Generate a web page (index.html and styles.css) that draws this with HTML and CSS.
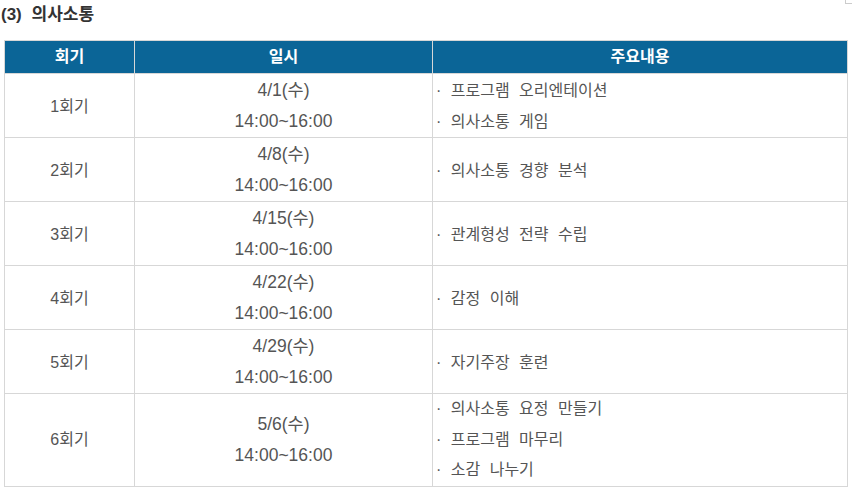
FILE: index.html
```html
<!DOCTYPE html>
<html lang="ko">
<head>
<meta charset="utf-8">
<link rel="stylesheet" href="styles.css">
</head>
<body>
<div class="corner"></div>
<h3 class="title">(3) 의사소통</h3>
<table class="tbl">
  <colgroup><col class="c1"><col class="c2"><col class="c3"></colgroup>
  <thead>
    <tr><th>회기</th><th>일시</th><th>주요내용</th></tr>
  </thead>
  <tbody>
    <tr><td>1회기</td><td class="date">4/1(수)<br>14:00~16:00</td><td class="left">· 프로그램 오리엔테이션<br>· 의사소통 게임</td></tr>
    <tr><td>2회기</td><td class="date">4/8(수)<br>14:00~16:00</td><td class="left">· 의사소통 경향 분석</td></tr>
    <tr><td>3회기</td><td class="date">4/15(수)<br>14:00~16:00</td><td class="left">· 관계형성 전략 수립</td></tr>
    <tr><td>4회기</td><td class="date">4/22(수)<br>14:00~16:00</td><td class="left">· 감정 이해</td></tr>
    <tr><td>5회기</td><td class="date">4/29(수)<br>14:00~16:00</td><td class="left">· 자기주장 훈련</td></tr>
    <tr class="last"><td>6회기</td><td class="date">5/6(수)<br>14:00~16:00</td><td class="left">· 의사소통 요정 만들기<br>· 프로그램 마무리<br>· 소감 나누기</td></tr>
  </tbody>
</table>
</body>
</html>
```
FILE: styles.css
```css
html, body { margin: 0; padding: 0; background: #fff; }
body {
  font-family: "Liberation Sans", "Noto Sans CJK KR", sans-serif;
  color: #555;
  position: relative;
  width: 852px;
  height: 491px;
  overflow: hidden;
}
.corner {
  position: absolute;
  left: 845px;
  top: 0;
  width: 10px;
  height: 3px;
  border-left: 1px solid #ccc;
  border-bottom: 1px solid #ccc;
}
.title {
  margin: 0;
  padding: 3px 0 0 1px;
  height: 40px;
  box-sizing: border-box;
  font-size: 17px;
  font-weight: 600;
  color: #333;
  line-height: 24px;
  word-spacing: 5px;
}
.tbl {
  margin-left: 4px;
  width: 844px;
  border-collapse: collapse;
  table-layout: fixed;
  border: 1px solid #d7d7d7;
}
.c1 { width: 130px; }
.c2 { width: 298px; }
.tbl th {
  background: #0b6597;
  color: #fff;
  font-weight: 700;
  font-size: 16px;
  height: 32px;
  padding: 0;
  border: 1px solid #d7d7d7;
  line-height: 20px;
}
.tbl td {
  border: 1px solid #d7d7d7;
  text-align: center;
  font-size: 16px;
  line-height: 31px;
  padding: 1px 0 0;
  color: #555;
}
.tbl td.date {
  font-size: 17.5px;
}
.tbl td.left {
  text-align: left;
  padding-left: 3px;
  word-spacing: 5px;
}
.tbl tr.last td {
  line-height: 30.5px;
  padding-top: 0;
}
```
